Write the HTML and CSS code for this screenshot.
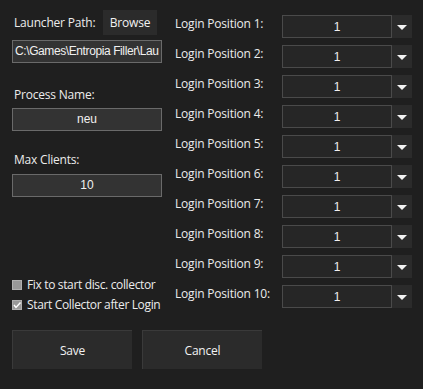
FILE: index.html
```html
<!DOCTYPE html>
<html lang="en">
  <head>
    <meta charset="UTF-8" />
    <title>Settings</title>
    <link rel="stylesheet" href="styles.css">
  </head>
  <body>
    <div class="window">
      <div class="main">
        <div class="left">
          <div class="launcher-row">
            <div class="label">Launcher Path:</div>
            <div class="btn browse">Browse</div>
          </div>
          <div class="textbox path">C:\Games\Entropia Filler\Lau</div>

          <div class="label field-label first">Process Name:</div>
          <div class="textbox centered">neu</div>

          <div class="label field-label">Max Clients:</div>
          <div class="textbox centered clients">10</div>

          <div class="checks">
            <div class="check-row">
              <span class="box"></span>
              <span class="label">Fix to start disc. collector</span>
            </div>
            <div class="check-row">
              <span class="box checked">
                <svg width="10" height="10" viewBox="0 0 10 10">
                  <path d="M2 5 L4 7.5 L8.5 2.5" fill="none" stroke="#fff" stroke-width="1.4" />
                </svg>
              </span>
              <span class="label">Start Collector after Login</span>
            </div>
          </div>
        </div>

        <div class="right">
          <div class="pos-row"><div class="label">Login Position 1:</div><div class="combo"><div class="combo-text">1</div><div class="combo-arrow"></div></div></div>
          <div class="pos-row"><div class="label">Login Position 2:</div><div class="combo"><div class="combo-text">1</div><div class="combo-arrow"></div></div></div>
          <div class="pos-row"><div class="label">Login Position 3:</div><div class="combo"><div class="combo-text">1</div><div class="combo-arrow"></div></div></div>
          <div class="pos-row"><div class="label">Login Position 4:</div><div class="combo"><div class="combo-text">1</div><div class="combo-arrow"></div></div></div>
          <div class="pos-row"><div class="label">Login Position 5:</div><div class="combo"><div class="combo-text">1</div><div class="combo-arrow"></div></div></div>
          <div class="pos-row"><div class="label">Login Position 6:</div><div class="combo"><div class="combo-text">1</div><div class="combo-arrow"></div></div></div>
          <div class="pos-row"><div class="label">Login Position 7:</div><div class="combo"><div class="combo-text">1</div><div class="combo-arrow"></div></div></div>
          <div class="pos-row"><div class="label">Login Position 8:</div><div class="combo"><div class="combo-text">1</div><div class="combo-arrow"></div></div></div>
          <div class="pos-row"><div class="label">Login Position 9:</div><div class="combo"><div class="combo-text">1</div><div class="combo-arrow"></div></div></div>
          <div class="pos-row"><div class="label">Login Position 10:</div><div class="combo"><div class="combo-text">1</div><div class="combo-arrow"></div></div></div>
        </div>
      </div>

      <div class="footer">
        <div class="btn big">Save</div>
        <div class="btn big">Cancel</div>
      </div>
    </div>
  </body>
</html>
```

FILE: styles.css
```css
* {
  box-sizing: border-box;
  margin: 0;
  padding: 0;
}

html,
body {
  width: 423px;
  height: 389px;
  overflow: hidden;
}

body {
  background: #1f1f1f;
  color: #ececec;
  font-family: "Open Sans", "Noto Sans", sans-serif;
  font-size: 12px;
}

.window {
  padding: 10px 0 0 12px;
}

.main {
  display: flex;
  gap: 13px;
  height: 320px;
}

.label {
  white-space: nowrap;
  line-height: 16px;
  letter-spacing: -0.2px;
}

/* left column */
.left {
  width: 150px;
  display: flex;
  flex-direction: column;
}

.launcher-row {
  display: flex;
  align-items: center;
  height: 25px;
  padding-left: 2px;
}

.btn {
  background: #2b2b2b;
  color: #f2f2f2;
  display: flex;
  align-items: center;
  justify-content: center;
  letter-spacing: -0.2px;
}

.browse {
  width: 54px;
  height: 25px;
  margin-left: auto;
  margin-right: 5px;
  padding-bottom: 1px;
}

.textbox {
  height: 23px;
  margin-top: 5px;
  background: #333333;
  border: 1px solid #6a6a6a;
  font-family: "Liberation Sans", Arial, sans-serif;
  font-size: 12px;
  line-height: 21px;
  padding-left: 2px;
  white-space: nowrap;
  overflow: hidden;
  color: #f0f0f0;
}

.textbox.path {
  letter-spacing: -0.4px;
}

.textbox.centered {
  text-align: center;
  padding-left: 0;
}

.textbox.clients {
  margin-top: 6px;
}

.field-label {
  margin-top: 21px;
  padding-left: 2px;
}

.field-label.first {
  margin-top: 24px;
}

.checks {
  margin-top: 80px;
  display: flex;
  flex-direction: column;
  gap: 4px;
}

.check-row {
  display: flex;
  align-items: center;
  height: 16px;
  gap: 5px;
}

.check-row .label {
  letter-spacing: -0.35px;
}

.box {
  width: 10px;
  height: 10px;
  background: #989898;
  border: 1px solid #b0b0b0;
  display: flex;
  align-items: center;
  justify-content: center;
}

.box svg {
  display: block;
  margin: -1px;
}

/* right column */
.right {
  display: flex;
  flex-direction: column;
  gap: 7px;
  padding-top: 5px;
}

.pos-row {
  display: flex;
  height: 23px;
}

.pos-row .label {
  width: 107px;
  line-height: 16px;
  padding-top: 1px;
}

.combo {
  display: flex;
  width: 130px;
  height: 23px;
}

.combo-text {
  width: 110px;
  background: #262626;
  border: 1px solid #4a4a4a;
  text-align: center;
  font-family: "Liberation Sans", Arial, sans-serif;
  line-height: 23px;
  color: #f0f0f0;
}

.combo-arrow {
  width: 20px;
  background: #2b2b2b;
  position: relative;
}

.combo-arrow::after {
  content: "";
  position: absolute;
  left: 5px;
  top: 10px;
  border-left: 5px solid transparent;
  border-right: 5px solid transparent;
  border-top: 5px solid #f2f2f2;
}

/* footer buttons */
.footer {
  display: flex;
  gap: 10px;
}

.btn.big {
  width: 120px;
  height: 39px;
  border-top: 1px solid #3a3a3a;
  border-left: 1px solid #3a3a3a;
}
```
